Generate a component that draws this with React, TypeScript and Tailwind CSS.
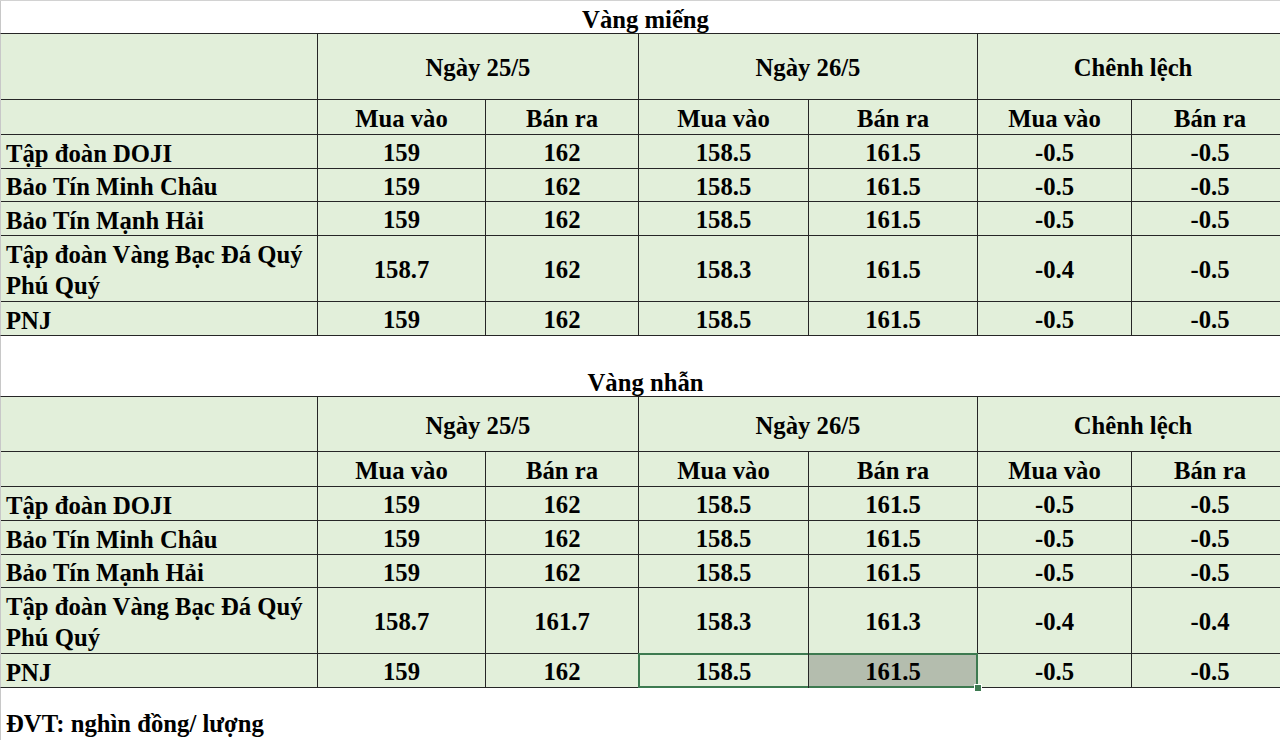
import React from 'react';

type Row = { name: string; values: string[] };

const mieng: Row[] = [
  { name: 'Tập đoàn DOJI', values: ['159', '162', '158.5', '161.5', '-0.5', '-0.5'] },
  { name: 'Bảo Tín Minh Châu', values: ['159', '162', '158.5', '161.5', '-0.5', '-0.5'] },
  { name: 'Bảo Tín Mạnh Hải', values: ['159', '162', '158.5', '161.5', '-0.5', '-0.5'] },
  { name: 'Tập đoàn Vàng Bạc Đá Quý Phú Quý', values: ['158.7', '162', '158.3', '161.5', '-0.4', '-0.5'] },
  { name: 'PNJ', values: ['159', '162', '158.5', '161.5', '-0.5', '-0.5'] },
];

const nhan: Row[] = [
  { name: 'Tập đoàn DOJI', values: ['159', '162', '158.5', '161.5', '-0.5', '-0.5'] },
  { name: 'Bảo Tín Minh Châu', values: ['159', '162', '158.5', '161.5', '-0.5', '-0.5'] },
  { name: 'Bảo Tín Mạnh Hải', values: ['159', '162', '158.5', '161.5', '-0.5', '-0.5'] },
  { name: 'Tập đoàn Vàng Bạc Đá Quý Phú Quý', values: ['158.7', '161.7', '158.3', '161.3', '-0.4', '-0.4'] },
  { name: 'PNJ', values: ['159', '162', '158.5', '161.5', '-0.5', '-0.5'] },
];

const cell = 'bg-[#e2efda] flex items-center justify-center pt-[3px]';

function PriceTable({ rows, rowsClass, selected }: { rows: Row[]; rowsClass: string; selected?: boolean }) {
  return (
    <div
      className={`w-[1288px] grid grid-cols-[316px_167px_152px_169px_168px_153px_1fr] gap-px bg-[#262626] border-y border-[#262626] border-l border-l-[#c8c8c8] ${rowsClass}`}
    >
      <div className={cell} />
      <div className={`${cell} col-span-2`}>Ngày 25/5</div>
      <div className={`${cell} col-span-2`}>Ngày 26/5</div>
      <div className={`${cell} col-span-2`}>Chênh lệch</div>

      <div className={cell} />
      <div className={cell}>Mua vào</div>
      <div className={cell}>Bán ra</div>
      <div className={cell}>Mua vào</div>
      <div className={cell}>Bán ra</div>
      <div className={cell}>Mua vào</div>
      <div className={cell}>Bán ra</div>

      {rows.map((r, i) => {
        const last = selected && i === rows.length - 1;
        return (
          <React.Fragment key={r.name}>
            <div className="bg-[#e2efda] flex items-center pl-[5px] pr-2 pt-[3px] leading-[31px]">{r.name}</div>
            {r.values.map((v, j) => {
              const picked = last && j === 3;
              const inSel = last && (j === 2 || j === 3);
              return (
                <div
                  key={j}
                  className={`flex items-center justify-center pt-[3px] ${picked ? 'bg-[#b4bdae]' : 'bg-[#e2efda]'} ${inSel ? 'relative' : ''}`}
                >
                  {v}
                  {last && j === 2 && (
                    <span className="absolute -left-px -top-px -bottom-px right-0 border-2 border-r-0 border-[#3d7a50]" />
                  )}
                  {picked && (
                    <>
                      <span className="absolute left-0 -top-px -bottom-px -right-px border-2 border-l-0 border-[#3d7a50]" />
                      <span className="absolute -right-[5px] -bottom-[5px] w-[8px] h-[8px] bg-[#3d7a50] border border-white" />
                    </>
                  )}
                </div>
              );
            })}
          </React.Fragment>
        );
      })}
    </div>
  );
}

export default function App() {
  return (
    <div className="w-[1280px] h-[741px] overflow-hidden bg-white text-black font-bold text-[24.7px] font-['Liberation_Serif','Times_New_Roman',serif] border-t border-[#d2d2d2]">
      <div className="h-[32px] flex items-end justify-center pl-[10px] leading-[26px] border-l border-[#c8c8c8]">
        Vàng miếng
      </div>
      <PriceTable rows={mieng} rowsClass="grid-rows-[65px_34px_33px_32px_33px_65px_33px]" />
      <div className="h-[60px] flex items-end justify-center pl-[10px] leading-[26px] border-l border-[#c8c8c8]">
        Vàng nhẫn
      </div>
      <PriceTable rows={nhan} rowsClass="grid-rows-[54px_34px_33px_33px_32px_65px_33px]" selected />
      <div className="h-[52px] flex items-end pl-[5px] leading-[32px] border-l border-[#c8c8c8]">
        ĐVT: nghìn đồng/ lượng
      </div>
    </div>
  );
}
